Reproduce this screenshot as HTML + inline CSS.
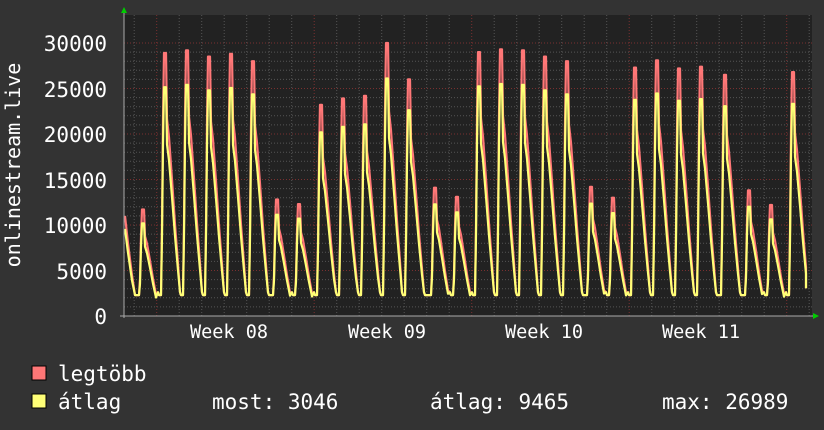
<!DOCTYPE html>
<html><head><meta charset="utf-8"><style>
html,body{margin:0;padding:0;background:#333333;}
svg{display:block}
text{font-family:"DejaVu Sans Mono","Liberation Mono",monospace;fill:#fff}
</style></head><body>
<svg id="s" width="824" height="430" xmlns="http://www.w3.org/2000/svg">
<rect width="824" height="430" fill="#333333"/>
<rect x="124" y="15" width="688" height="301" fill="#222222"/>
<g id="grid"></g>
<g id="data"></g>
<line x1="124" y1="12" x2="124" y2="318" stroke="#aaa" stroke-width="1"/>
<line x1="120" y1="316" x2="814" y2="316" stroke="#aaa" stroke-width="1"/>
<polygon points="121,13 127,13 124,7" fill="#0c0"/>
<polygon points="813,313 813,319 819,316" fill="#0c0"/>
<g font-size="21" text-anchor="end">
<text x="107" y="51">30000</text>
<text x="107" y="97">25000</text>
<text x="107" y="142">20000</text>
<text x="107" y="188">15000</text>
<text x="107" y="233">10000</text>
<text x="107" y="279">5000</text>
<text x="107" y="324">0</text>
</g>
<text transform="translate(20,165) rotate(-90)" font-size="20" text-anchor="middle">onlinestream.live</text>
<g font-size="18.5" text-anchor="middle">
<text x="229" y="338">Week 08</text>
<text x="387" y="338">Week 09</text>
<text x="544" y="338">Week 10</text>
<text x="701" y="338">Week 11</text>
</g>
<rect x="32" y="366" width="14" height="14" fill="#ff7777" stroke="#000" stroke-width="1"/>
<rect x="32" y="394" width="14" height="14" fill="#ffff77" stroke="#000" stroke-width="1"/>
<g font-size="21">
<text x="58" y="381">legtöbb</text>
<text x="58" y="409">átlag</text>
<text x="212" y="409">most: 3046</text>
<text x="430" y="409">átlag: 9465</text>
<text x="662" y="409">max: 26989</text>
</g>
</svg>
<script>
var ns="http://www.w3.org/2000/svg";
function el(p,t,a){var e=document.createElementNS(ns,t);for(var k in a)e.setAttribute(k,a[k]);p.appendChild(e);return e;}
var g=document.getElementById('grid');
function Y(v){return 316-v*273/30000;}
for(var v=1000;v<=30000;v+=1000){var y=Y(v);var maj=v%5000==0;
el(g,'line',{x1:124,x2:812,y1:y,y2:y,stroke:maj?'#7a3030':'#555','stroke-width':1,'stroke-dasharray':'1,2'});}
for(var x=134.2;x<812;x+=22.5){var maj=Math.abs(((x-156.7)/157.5)-Math.round((x-156.7)/157.5))<0.02;
el(g,'line',{x1:x,x2:x,y1:15,y2:316,stroke:maj?'#7a3030':'#555','stroke-width':1,'stroke-dasharray':'1,2'});}
var peaks=[[144,11700],[166,28900],[188,29200],[210,28500],[232,28800],[254,28000],[278,12800],[300,12300],[322,23200],[344,23900],[366,24200],[388,30000],[410,26000],[436,14100],[458,13100],[480,29000],[502,29300],[524,29200],[546,28500],[568,28000],[592,14200],[614,13000],[636,27300],[658,28100],[680,27200],[702,27400],[726,26500],[750,13800],[772,12200],[794,26800]];
function series(f,base){var pts=[];
pts.push([125,11000*f]);pts.push([128,8000*f]);pts.push([132,4500*f]);pts.push([135,base]);pts.push([139,base]);
for(var i=0;i<peaks.length;i++){var p=peaks[i][0],h=peaks[i][1]*f;
pts.push([p-5,base]);pts.push([p-4,0.35*h]);pts.push([p-3,0.75*h]);pts.push([p-2,h]);pts.push([p,h]);pts.push([p+1,0.75*h]);
pts.push([p+3,h*0.68]);pts.push([p+6,h*0.52]);pts.push([p+9,h*0.35]);pts.push([p+12,h*0.2]);pts.push([p+14,base+300]);pts.push([p+15,base]);}
pts.push([806,3046]);
return pts.filter(function(q){return q[0]<=807;}).map(function(q){return q[0]+','+Y(q[1]).toFixed(1)}).join(' ');}
var d=document.getElementById('data');
el(d,'polyline',{points:series(1,2300),fill:'none',stroke:'#ff7777','stroke-width':2.2,'stroke-linejoin':'round'});
el(d,'polyline',{points:series(0.87,2300),fill:'none',stroke:'#ffff77','stroke-width':2.2,'stroke-linejoin':'round'});
</script>
</body></html>
